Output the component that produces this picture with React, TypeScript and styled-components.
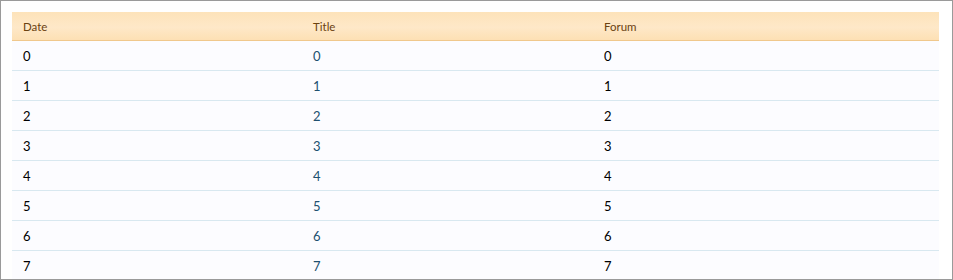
import React from "react";
import styled, { createGlobalStyle } from "styled-components";

const Global = createGlobalStyle`
  html, body { margin: 0; padding: 0; background: #fff; }
  * { box-sizing: border-box; }
`;

const Frame = styled.div`
  width: 953px;
  height: 280px;
  border: 1px solid #9a9a9a;
  background: #fff;
  padding: 11px 13px 0 11px;
  overflow: hidden;
  font-family: "Trebuchet MS", "Lato", "DejaVu Sans", sans-serif;
`;

const Table = styled.div`
  width: 927px;
  background: #fcfcff;
`;

const Row = styled.div<{ $head?: boolean }>`
  display: grid;
  grid-template-columns: 290px 291px 1fr;
  height: ${(p) => (p.$head ? "29px" : "30px")};
  align-items: center;
  border-bottom: 1px solid ${(p) => (p.$head ? "#f0c88c" : "#d8e8f0")};
  background: ${(p) =>
    p.$head ? "linear-gradient(to bottom, #fde3ba 0%, #fee8c8 55%, #fde0b4 100%)" : "transparent"};
`;

const HeadCell = styled.div`
  padding-left: 11px;
  font-size: 11.5px;
  color: #6b4210;
`;

const Cell = styled.div<{ $link?: boolean }>`
  padding-left: 11px;
  font-size: 13px;
  color: ${(p) => (p.$link ? "#20506f" : "#000")};
`;

const rows = [0, 1, 2, 3, 4, 5, 6, 7];

export default function App() {
  return (
    <>
      <Global />
      <Frame>
        <Table>
          <Row $head>
            <HeadCell>Date</HeadCell>
            <HeadCell>Title</HeadCell>
            <HeadCell>Forum</HeadCell>
          </Row>
          {rows.map((r) => (
            <Row key={r}>
              <Cell>{r}</Cell>
              <Cell $link>{r}</Cell>
              <Cell>{r}</Cell>
            </Row>
          ))}
        </Table>
      </Frame>
    </>
  );
}
